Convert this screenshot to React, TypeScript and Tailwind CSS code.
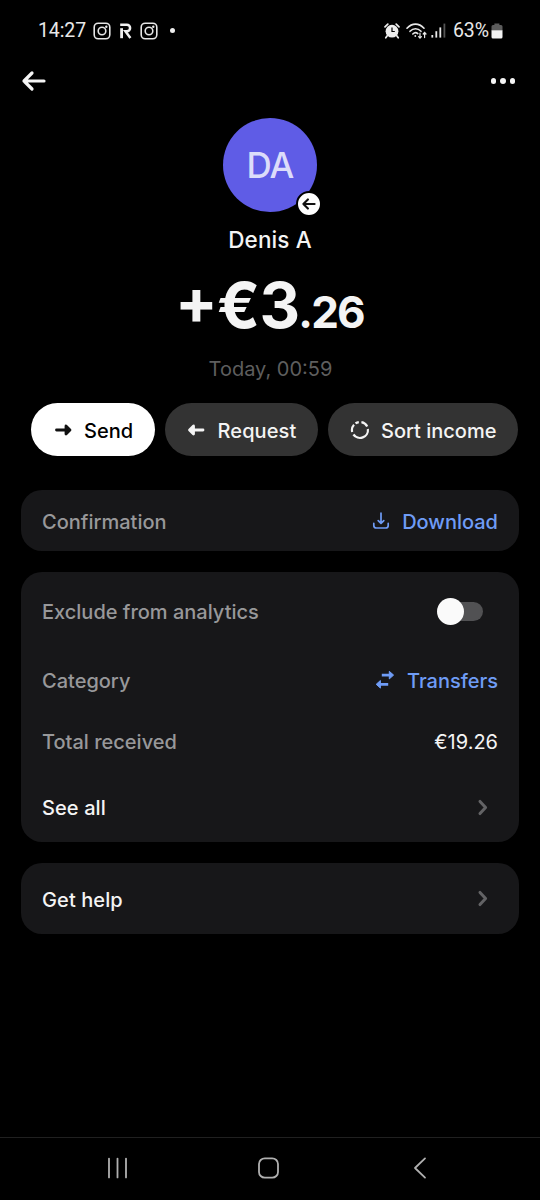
import type { ReactNode } from 'react'

const LINK = 'text-[#6f9cf6]'

function InstagramIcon() {
  return (
    <svg width="18" height="18" viewBox="0 0 18 18" fill="none" stroke="#e6e6e6" strokeWidth="1.6">
      <rect x="1.2" y="1.2" width="15.6" height="15.6" rx="4" />
      <circle cx="9" cy="9" r="3.8" />
      <circle cx="13.3" cy="4.7" r="1.2" fill="#e6e6e6" stroke="none" />
    </svg>
  )
}

// Revolut-style "R" glyph shown among the notification icons
function RevolutIcon() {
  return (
    <svg width="12" height="16" viewBox="0 0 12 16" fill="none" stroke="#f0f0f0">
      <path d="M1.6 5.2V15.2" strokeWidth="2.8" />
      <path d="M0.2 1.8H6.9A3.2 3.2 0 0 1 6.9 8.2H5.4L10.4 15" strokeWidth="2.5" />
    </svg>
  )
}

function AlarmIcon() {
  return (
    <svg width="16" height="16" viewBox="0 0 16 16" fill="none">
      <path d="M1 3.8L3.8 1.2M15 3.8L12.2 1.2M3.2 12.8L1.8 14.8M12.8 12.8L14.2 14.8" stroke="#eee" strokeWidth="1.7" strokeLinecap="round" />
      <circle cx="8" cy="8.2" r="6.4" fill="#eee" />
      <path d="M8 4.6V8.5H10.8" stroke="#000" strokeWidth="1.2" />
    </svg>
  )
}

function WifiIcon() {
  return (
    <svg width="22" height="18" viewBox="0 0 22 18" fill="none" stroke="#e8e8e8" strokeWidth="1.6" strokeLinecap="round">
      <path d="M1 6.2C6 0.8 13 0.8 18 6.2" />
      <path d="M4 9.3C7.3 5.8 11.7 5.8 15 9.3" />
      <path d="M6.8 12C8.6 10.3 10.3 10.3 11.8 11.6" />
      <circle cx="9.3" cy="14" r="0.9" fill="#e8e8e8" stroke="none" />
      <path d="M14 11.2V16M12.6 14.7L14 16.2L15.4 14.7M18.6 15.6V10.6M17.2 12L18.6 10.4L20 12" strokeWidth="1.2" />
    </svg>
  )
}

function SignalIcon() {
  return (
    <svg width="15" height="15" viewBox="0 0 15 15" fill="#e8e8e8">
      <rect x="0.4" y="12" width="1.8" height="2.6" />
      <rect x="4.4" y="8.2" width="1.8" height="6.4" />
      <rect x="8.4" y="4.4" width="1.8" height="10.2" />
      <rect x="12.5" y="0.6" width="1.8" height="14" fill="#555" />
    </svg>
  )
}

function BatteryIcon() {
  return (
    <svg width="12" height="16" viewBox="0 0 12 16">
      <path d="M3.4 0.4H8.4V2H10A1.5 1.5 0 0 1 11.5 3.5V7.4H0.5V3.5A1.5 1.5 0 0 1 2 2H3.4Z" fill="#5c5c5c" />
      <path d="M0.5 7.2H11.5V14A1.5 1.5 0 0 1 10 15.5H2A1.5 1.5 0 0 1 0.5 14Z" fill="#f2f2f2" />
    </svg>
  )
}

function StatusBar() {
  return (
    <div className="flex h-[61px] items-center justify-between pr-[37px] pl-[38px] font-['Roboto',sans-serif] text-[19.5px] text-[#e8e8e8]">
      <div className="flex items-center">
        <span className="w-[55px] tracking-[-0.1px]">14:27</span>
        <InstagramIcon />
        <span className="ml-[9px] pt-px"><RevolutIcon /></span>
        <span className="ml-2"><InstagramIcon /></span>
        <span className="ml-[12px] size-[5px] rounded-full bg-[#eeeeee]" />
      </div>
      <div className="flex items-center">
        <AlarmIcon />
        <span className="ml-[6px]"><WifiIcon /></span>
        <span className="ml-[3px]"><SignalIcon /></span>
        <span className="ml-[7px] w-[38px] tracking-[-0.1px]">63%</span>
        <BatteryIcon />
      </div>
    </div>
  )
}

function Header() {
  return (
    <header className="flex h-10 items-center justify-between pr-[25px] pl-[21px]">
      <svg width="26" height="22" viewBox="0 0 26 22" fill="none" stroke="#f5f5f5" strokeWidth="3.2" strokeLinecap="round" strokeLinejoin="round">
        <path d="M23 11H3M11 3L3 11L11 19" />
      </svg>
      <div className="flex gap-1">
        <span className="size-[5.5px] rounded-full bg-[#f5f5f5]" />
        <span className="size-[5.5px] rounded-full bg-[#f5f5f5]" />
        <span className="size-[5.5px] rounded-full bg-[#f5f5f5]" />
      </div>
    </header>
  )
}

function Chevron() {
  return (
    <svg className="mr-[10px] mb-[2px]" width="11" height="17" viewBox="0 0 11 17" fill="none" stroke="#636365" strokeWidth="3" strokeLinecap="round" strokeLinejoin="round">
      <path d="M3 2.4L8.6 8.5L3 14.6" />
    </svg>
  )
}

interface RowProps {
  label: string
  height: string
  strong?: boolean
  children: ReactNode
}

function Row({ label, height, strong, children }: RowProps) {
  return (
    <div className={`flex items-center justify-between ${height}`}>
      <span className={`font-medium ${strong ? 'tracking-[0.1px] text-[#f4f4f4]' : 'text-[#98989a]'}`}>{label}</span>
      {children}
    </div>
  )
}

function Card({ children }: { children: ReactNode }) {
  return <section className="rounded-[21px] bg-[#171719] px-[21px]">{children}</section>
}

export default function App() {
  return (
    <div className="flex h-[1200px] w-[540px] flex-col overflow-hidden bg-black font-['Inter',sans-serif] text-[20px] leading-6 text-[#f4f4f4]">
      <StatusBar />
      <Header />

      <div className="flex flex-col items-center">
        <div className="relative mt-[17px] flex size-[94px] items-center justify-center rounded-full bg-[#5f5ce6]">
          <span className="pb-px text-[35px] font-medium tracking-[-1px] text-[#dcdcfa]">DA</span>
          <span className="absolute -right-[5px] -bottom-[5px] flex size-[26px] items-center justify-center rounded-full border-2 border-black bg-white">
            <svg width="14" height="12" viewBox="0 0 14 12" fill="none" stroke="#111" strokeWidth="2.1" strokeLinecap="round" strokeLinejoin="round">
              <path d="M12.6 6H1.4M5.9 1.4L1.4 6L5.9 10.6" />
            </svg>
          </span>
        </div>
        <h1 className="mt-[14px] text-[22.5px] leading-7 font-medium tracking-[0.1px]">Denis A</h1>
        <p className="mt-[10px] mr-px text-[63px] leading-[82px] font-bold tracking-[-0.8px]">
          {/* the plus is raised to sit level with the cap-height digits */}
          <span className="inline-block -translate-y-[4px]">+</span>€3<span className="-ml-px text-[44px] tracking-[-1.8px]">.26</span>
        </p>
        <p className="mt-[4px] ml-px text-[#5e5e5e]">Today, 00:59</p>
      </div>

      <div className="mt-[22px] ml-[31px] flex gap-[10px] font-medium">
        <button className="flex h-[53px] w-[124px] items-center rounded-full bg-white pl-6 text-black">
          <svg width="18" height="14" viewBox="0 0 18 14" fill="none" stroke="#111" strokeWidth="2.8" strokeLinecap="round" strokeLinejoin="round">
            <path d="M1.5 7H12" />
            <path d="M11 3L15 7L11 11Z" fill="#111" />
          </svg>
          <span className="ml-[11px] pt-0.5">Send</span>
        </button>
        <button className="flex h-[53px] w-[153px] items-center rounded-full bg-[#333333] pl-[22px]">
          <svg width="18" height="14" viewBox="0 0 18 14" fill="none" stroke="#f4f4f4" strokeWidth="2.8" strokeLinecap="round" strokeLinejoin="round">
            <path d="M16 7H6" />
            <path d="M6.5 3L2.5 7L6.5 11Z" fill="#f4f4f4" />
          </svg>
          <span className="ml-[12.5px] pt-0.5 tracking-[0.1px]">Request</span>
        </button>
        <button className="flex h-[53px] w-[190px] items-center rounded-full bg-[#333333] pl-[22px]">
          <svg width="20" height="20" viewBox="0 0 20 20" fill="none" stroke="#f4f4f4" strokeWidth="2.2">
            <path d="M11.4 2.1A8 8 0 0 1 17.2 6.5" />
            <path d="M17.9 9A8 8 0 0 1 3.4 14.5" />
            <path d="M2.2 12A8 8 0 0 1 4 4.7" />
            <path d="M5.5 3.4A8 8 0 0 1 8.8 2.1" />
          </svg>
          <span className="ml-[11px] pt-0.5">Sort income</span>
        </button>
      </div>

      <main className="mt-[34px] flex flex-col gap-[21px] px-[21px]">
        <Card>
          <Row label="Confirmation" height="h-[61px] pt-[2px]">
            <span className={`flex items-center gap-3 font-medium ${LINK}`}>
              <svg className="mb-0.5" width="18" height="18" viewBox="0 0 18 18" fill="none" stroke="currentColor" strokeWidth="1.7" strokeLinecap="round" strokeLinejoin="round">
                <path d="M9 1.2V11M6.2 8.6L9 11.4L11.8 8.6" />
                <path d="M1.8 11.4V13.4Q1.8 16 4.4 16H13.6Q16.2 16 16.2 13.4V11.4" />
              </svg>
              Download
            </span>
          </Row>
        </Card>

        <Card>
          <Row label="Exclude from analytics" height="h-[78px] pt-px">
            <span className="mr-[15px] mb-px flex h-[27px] w-[46px] items-center">
              <span className="relative size-[27px] shrink-0 rounded-full bg-[#fafafa]" />
              <span className="-ml-[14px] h-[19px] w-[33px] shrink-0 rounded-full bg-[#515153]" />
            </span>
          </Row>
          <Row label="Category" height="h-[62px]">
            <span className={`flex items-center gap-3 font-medium ${LINK}`}>
              <svg className="mb-0.5" width="20" height="20" viewBox="0 0 20 20" fill="currentColor" stroke="currentColor" strokeLinejoin="round">
                <path d="M6.8 5.1H15M4.5 14.3H13.2" strokeWidth="2.8" fill="none" />
                <path d="M14.3 1.3L18.6 5.1L14.3 8.9ZM5.4 10.5L1.2 14.3L5.4 18.1Z" strokeWidth="1" />
              </svg>
              Transfers
            </span>
          </Row>
          <Row label="Total received" height="h-[60px]">
            <span>€19.26</span>
          </Row>
          <Row label="See all" height="h-[70px] pt-[2px]" strong>
            <Chevron />
          </Row>
        </Card>

        <Card>
          <Row label="Get help" height="h-[71px] pt-[2px]" strong>
            <Chevron />
          </Row>
        </Card>
      </main>

      <nav className="mt-auto flex h-[63px] items-center border-t border-[#202020] pb-0.5 pl-[107px]">
        <svg width="21" height="22" viewBox="0 0 21 22" stroke="#b0b0b0" strokeWidth="1.8" strokeLinecap="round">
          <path d="M2 1.6V20.4M10.5 1.6V20.4M19 1.6V20.4" />
        </svg>
        <svg className="ml-[130px]" width="21" height="22" viewBox="0 0 21 22" fill="none" stroke="#b0b0b0" strokeWidth="1.8">
          <rect x="1" y="1.3" width="19" height="19.4" rx="5.8" />
        </svg>
        <svg className="ml-[134px]" width="14" height="22" viewBox="0 0 14 22" fill="none" stroke="#b0b0b0" strokeWidth="1.8" strokeLinecap="round" strokeLinejoin="round">
          <path d="M12 1.4L2 11L12 20.6" />
        </svg>
      </nav>
    </div>
  )
}
